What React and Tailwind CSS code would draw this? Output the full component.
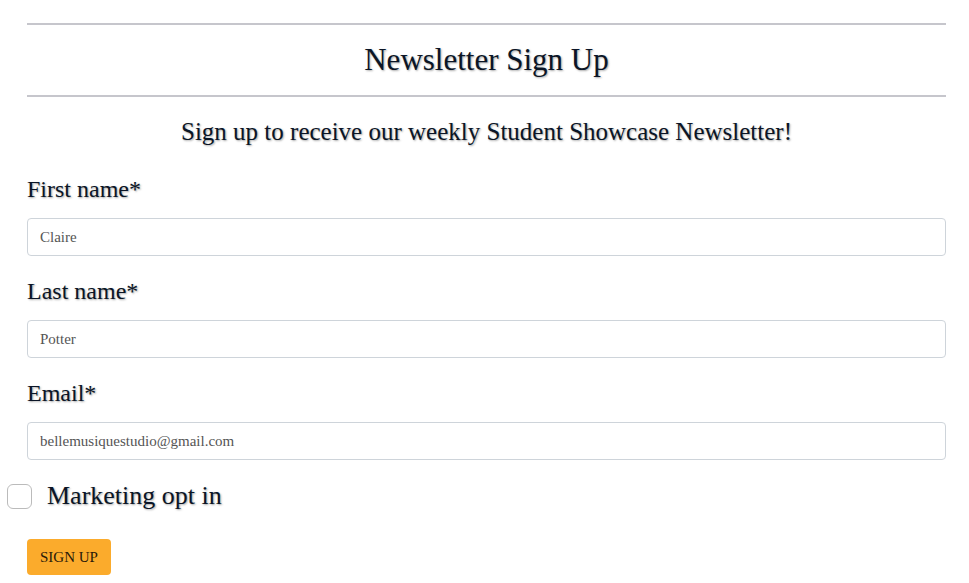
export default function App() {
  const shadow = "[text-shadow:1px_1px_2px_rgba(0,0,0,0.35)]";
  const font = "font-['Liberation_Serif',serif]";
  const Field = ({ label, value, className = "" }) => (
    <div className={className}>
      <label className={`block text-[24px] leading-[28px] text-[#0b1526] ${shadow}`}>{label}</label>
      <input
        readOnly
        defaultValue={value}
        className="mt-[15px] block h-[38px] w-full rounded-[4px] border border-[#ced4da] bg-white px-[12px] text-[15px] text-[#555] outline-none"
      />
    </div>
  );
  return (
    <div className={`min-h-[583px] w-[969px] bg-white ${font}`}>
      <div className="px-[27px] pr-[23px] pt-[23px]">
        <div className="h-[2px] bg-[#c6c6cc]" />
        <h1 className={`py-[17px] text-center text-[31px] leading-[36px] text-[#0b1526] ${shadow}`}>
          Newsletter Sign Up
        </h1>
        <div className="h-[2px] bg-[#c6c6cc]" />
        <p className={`mt-[20px] text-center text-[25px] leading-[30px] text-[#0b1526] ${shadow}`}>
          Sign up to receive our weekly Student Showcase Newsletter!
        </p>
        <Field label="First name*" value="Claire" className="mt-[28px]" />
        <Field label="Last name*" value="Potter" className="mt-[21px]" />
        <Field label="Email*" value="bellemusiquestudio@gmail.com" className="mt-[21px]" />
        <div className="mt-[21px] flex items-center">
          <span className="ml-[-20px] h-[25px] w-[25px] rounded-[6px] border border-[#bbb] bg-white" />
          <span className={`ml-[15px] text-[26px] leading-[30px] text-[#0b1526] ${shadow}`}>Marketing opt in</span>
        </div>
        <button className="mt-[28px] h-[36px] rounded-[4px] bg-[#fbab2c] px-[13px] text-[15px] text-[#2a1a08]">
          SIGN UP
        </button>
      </div>
    </div>
  );
}
